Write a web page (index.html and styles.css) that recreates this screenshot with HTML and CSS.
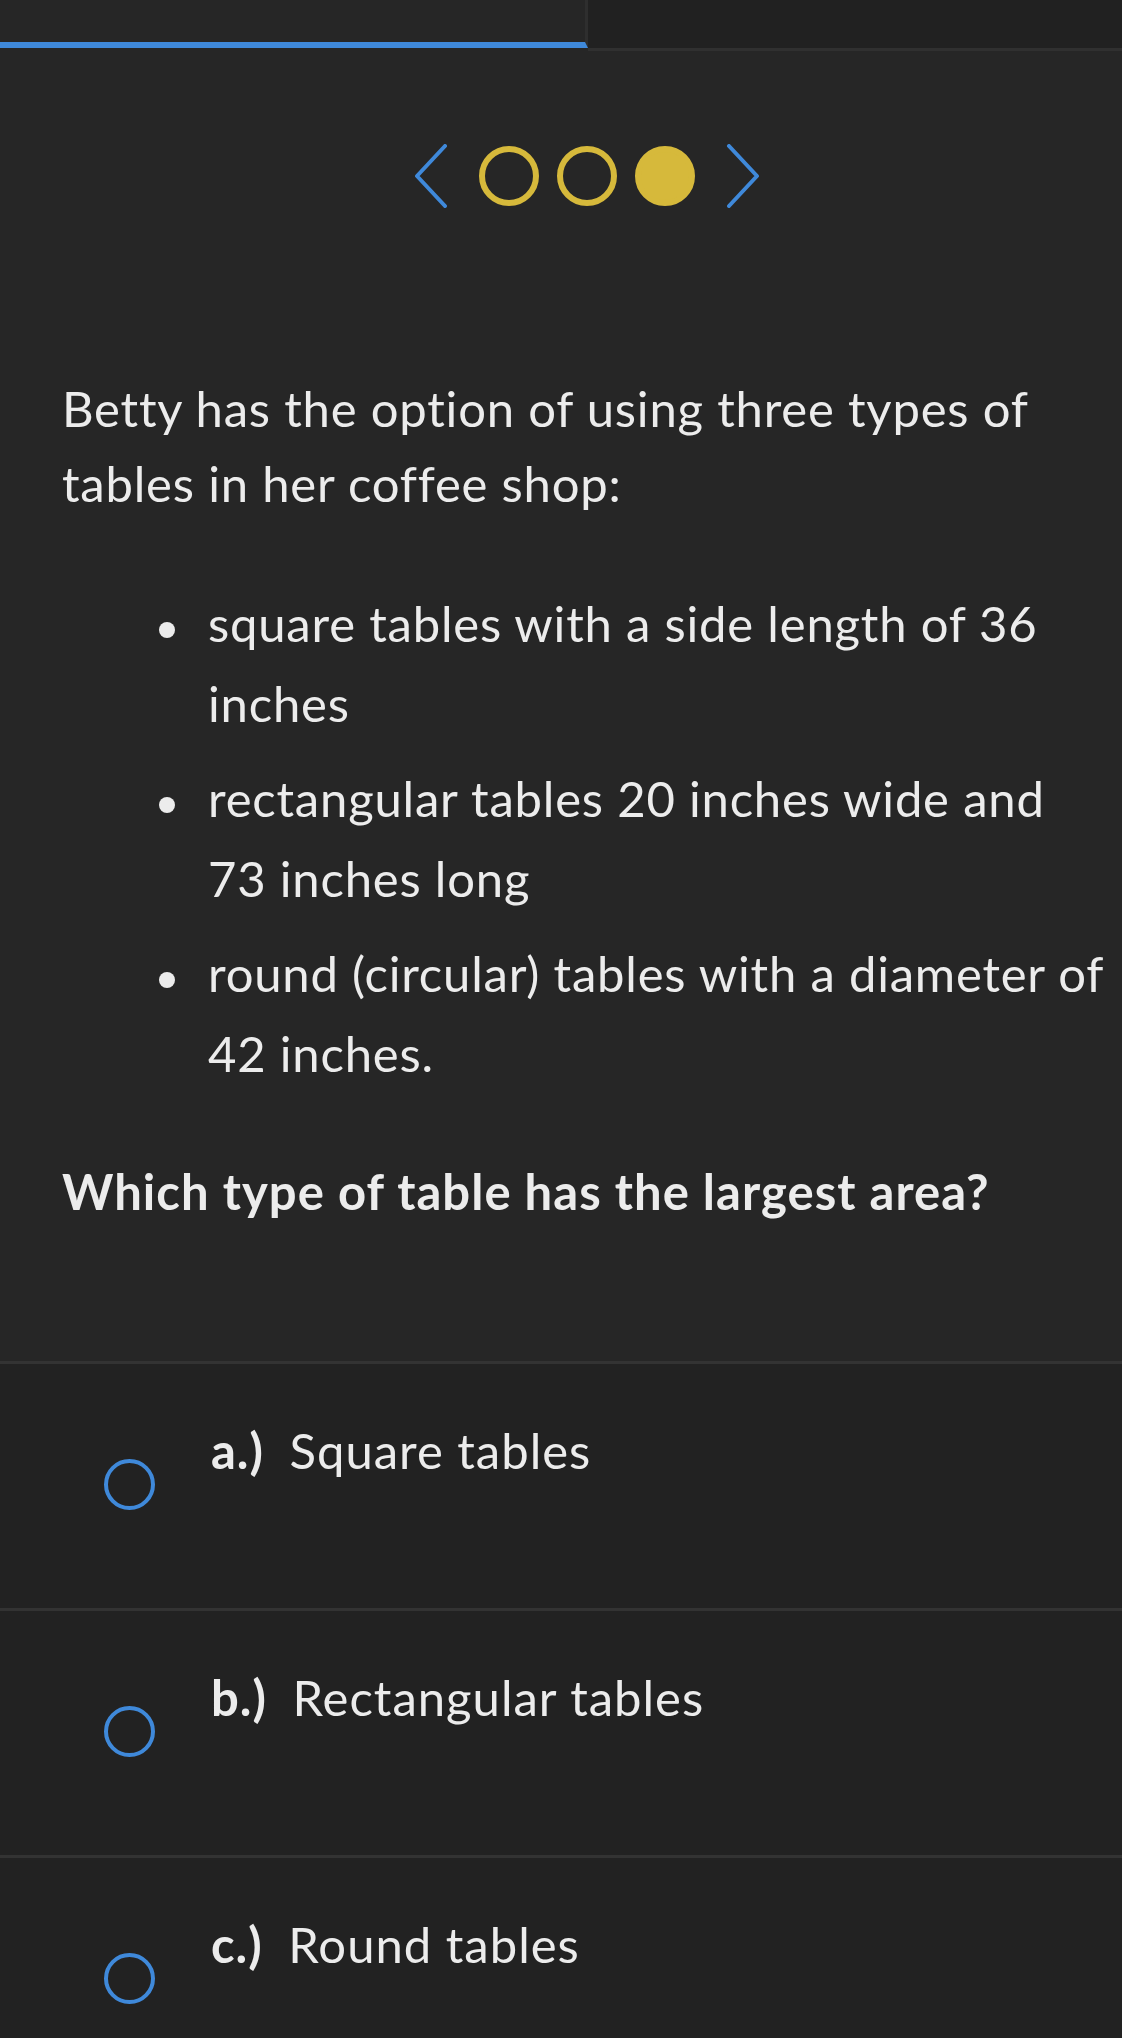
FILE: index.html
```html
<!DOCTYPE html>
<html lang="en">
<head>
  <meta charset="UTF-8">
  <title>Question 3</title>
  <link rel="stylesheet" href="styles.css">
</head>
<body>
  <div class="app">
    <div class="tabs">
      <div class="tab active"></div>
      <div class="tab"></div>
    </div>

    <div class="question">
      <div class="pager">
        <svg class="arrow" width="34" height="64" viewBox="0 0 34 64">
          <polyline points="31,2 3,32 31,62" />
        </svg>
        <span class="dot"></span>
        <span class="dot"></span>
        <span class="dot current"></span>
        <svg class="arrow" width="34" height="64" viewBox="0 0 34 64">
          <polyline points="3,2 31,32 3,62" />
        </svg>
      </div>

      <div class="prompt">
        <p>Betty has the option of using three types of tables in her coffee shop:</p>
        <ul>
          <li>square tables with a side length of 36 inches</li>
          <li>rectangular tables 20 inches wide and 73 inches long</li>
          <li>round (circular) tables with a diameter of 42 inches.</li>
        </ul>
        <p class="ask">Which type of table has the largest area?</p>
      </div>
    </div>

    <div class="choices">
      <label class="choice">
        <span class="radio"></span>
        <span class="answer"><b>a.)</b> Square tables</span>
      </label>
      <label class="choice">
        <span class="radio"></span>
        <span class="answer"><b>b.)</b> Rectangular tables</span>
      </label>
      <label class="choice">
        <span class="radio"></span>
        <span class="answer"><b>c.)</b> Round tables</span>
      </label>
    </div>
  </div>
</body>
</html>
```

FILE: styles.css
```css
html, body { margin: 0; height: 100%; overflow: hidden; background: #222222; }
body { font-family: Lato, "Open Sans", sans-serif; color: #ececec; }

.app { width: 1174px; height: 100%; overflow: hidden; }

/* tab strip */
.tabs { display: flex; height: 48px; }
.tab { flex: 1; background: #212121; border-bottom: 3px solid #303030; margin-bottom: -3px; }
.tab.active { flex: none; width: 585px; background: #262626; border-bottom: 6px solid #3f89da; margin-bottom: 0; border-right: 3px solid #2e2e2e; }

/* question area */
.question { background: #262626; padding: 95px 62px 132px; border-top: 3px solid transparent; }

.pager { display: flex; justify-content: center; align-items: center; gap: 18px; height: 60px; margin-bottom: 165px; }
.pager .arrow { fill: none; stroke: #3f89da; stroke-width: 4; stroke-linecap: round; stroke-linejoin: round; }
.pager .arrow:first-child { margin-right: 13px; }
.pager .arrow:last-child { margin-left: 13px; }
.dot { width: 48px; height: 48px; border-radius: 50%; border: 6px solid #d6b93b; }
.dot.current { background: #d6b93b; }

.prompt { font-size: 49px; letter-spacing: 0.8px; }
.prompt p { margin: 0; line-height: 74.5px; }
.prompt ul { list-style: none; margin: 63px 0 61px; padding-left: 146px; line-height: 80px; }
.prompt li { display: flex; }
.prompt li::before { content: ""; flex: none; width: 16px; height: 16px; margin: 39px 33px 0 -49px; border-radius: 50%; background: #ececec; }
.prompt li + li { margin-top: 15px; }
.prompt .ask { font-weight: bold; letter-spacing: 1.05px; }

/* answer rows */
.choices { background: #222222; }
.choice { display: flex; align-items: flex-start; height: 244px; padding-left: 104px; border-top: 3px solid #333333; cursor: pointer; }
.radio { flex: none; width: 43px; height: 43px; margin-top: 95px; border: 4px solid #3f89da; border-radius: 50%; }
.answer { margin: 56px 0 0 56px; font-size: 49px; letter-spacing: 1px; line-height: 60px; }
.answer b { margin-right: 12px; }
```
